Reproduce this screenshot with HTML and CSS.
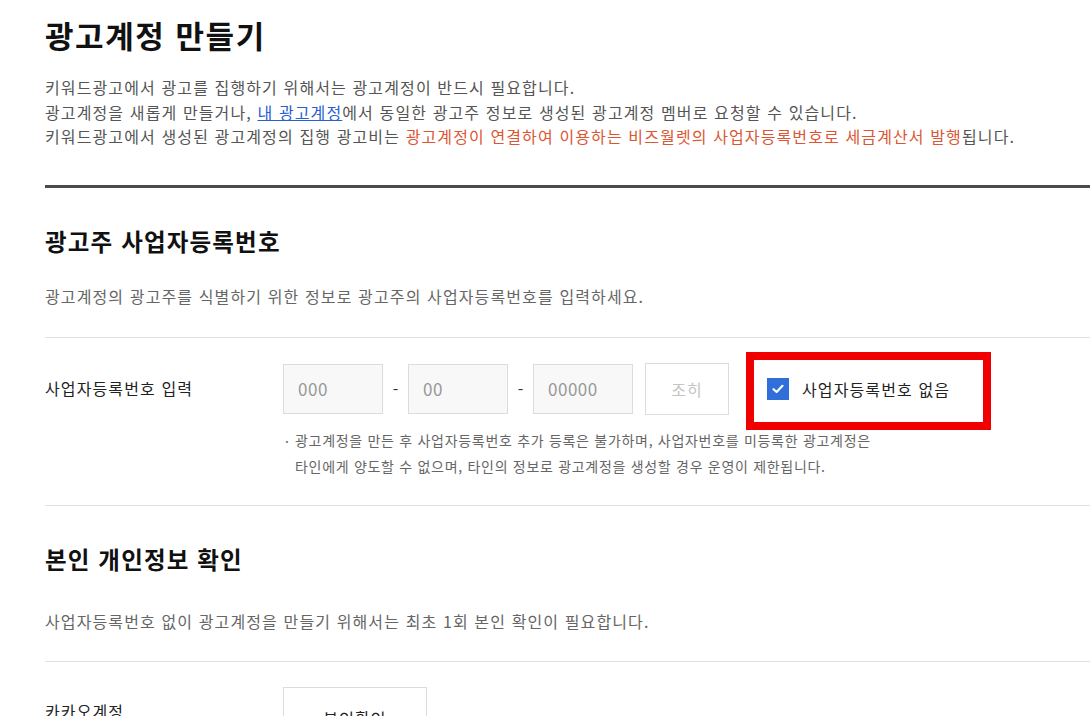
FILE: index.html
```html
<!DOCTYPE html>
<html lang="ko">
<head>
<meta charset="utf-8">
<title>광고계정 만들기</title>
<link rel="stylesheet" href="styles.css">
</head>
<body>
<main class="page">
  <h1 class="page-title">광고계정 만들기</h1>
  <p class="intro">
    키워드광고에서 광고를 집행하기 위해서는 광고계정이 반드시 필요합니다.<br>
    광고계정을 새롭게 만들거나, <a class="link" href="#">내 광고계정</a>에서 동일한 광고주 정보로 생성된 광고계정 멤버로 요청할 수 있습니다.<br>
    키워드광고에서 생성된 광고계정의 집행 광고비는 <span class="accent">광고계정이 연결하여 이용하는 비즈월렛의 사업자등록번호로 세금계산서 발행</span>됩니다.
  </p>

  <section class="section section-first">
    <h2 class="section-title">광고주 사업자등록번호</h2>
    <p class="section-desc">광고계정의 광고주를 식별하기 위한 정보로 광고주의 사업자등록번호를 입력하세요.</p>
    <div class="form-row">
      <div class="row-label">사업자등록번호 입력</div>
      <div class="row-field">
        <div class="field-line">
          <input class="num-input" type="text" placeholder="000">
          <span class="dash">-</span>
          <input class="num-input" type="text" placeholder="00">
          <span class="dash">-</span>
          <input class="num-input" type="text" placeholder="00000">
          <button class="btn-lookup" type="button">조히</button>
          <label class="check">
            <span class="check-box">
              <svg width="14" height="14" viewBox="0 0 14 14"><path d="M2.5 7.2 L5.6 10 L11.5 3.8" fill="none" stroke="#fff" stroke-width="2.2" stroke-linecap="round" stroke-linejoin="round"/></svg>
            </span>
            <span class="check-text">사업자등록번호 없음</span>
            <span class="highlight"></span>
          </label>
        </div>
        <div class="note">
          <span class="note-dot">.</span>
          <span class="note-text">광고계정을 만든 후 사업자등록번호 추가 등록은 불가하며, 사업자번호를 미등록한 광고계정은<br>타인에게 양도할 수 없으며, 타인의 정보로 광고계정을 생성할 경우 운영이 제한됩니다.</span>
        </div>
      </div>
    </div>
  </section>

  <section class="section section-second">
    <h2 class="section-title">본인 개인정보 확인</h2>
    <p class="section-desc">사업자등록번호 없이 광고계정을 만들기 위해서는 최초 1회 본인 확인이 필요합니다.</p>
    <div class="form-row">
      <div class="row-label row-label-mid">카카오계정</div>
      <div class="row-field">
        <button class="btn-verify" type="button">본인확인</button>
      </div>
    </div>
  </section>
</main>
</body>
</html>
```

FILE: styles.css
```css
html, body {
  margin: 0;
  padding: 0;
  overflow: hidden;
  background: #fff;
}

body {
  font-family: "Noto Sans CJK KR", "Noto Sans", sans-serif;
  color: #222;
  letter-spacing: 0.07em;
}

.page {
  padding-left: 45px;
}

.page-title {
  margin: 15px 0 0;
  font-size: 31px;
  line-height: 40px;
  font-weight: 700;
  color: #111;
  letter-spacing: 0.05em;
}

.intro {
  margin: 20px 0 0;
  font-size: 16px;
  line-height: 24.5px;
  color: #555;
}

.link {
  color: #2a5fcf;
  text-decoration: underline;
}

.accent {
  color: #dc5634;
}

.section {
  border-top: 1px solid #e1e1e1;
  padding-top: 39px;
}

.section-first {
  margin-top: 36px;
  border-top: 3px solid #4b4b4b;
  padding-top: 37px;
}

.section-second {
  padding-top: 37px;
}

.section-title {
  margin: 0;
  font-size: 23.5px;
  line-height: 32px;
  font-weight: 700;
  color: #111;
  letter-spacing: 0.05em;
}

.section-desc {
  margin: 27px 0 0;
  font-size: 16px;
  line-height: 24px;
  color: #666;
  padding-bottom: 29px;
}

.section-second .section-desc {
  margin-top: 34px;
  padding-bottom: 28px;
}

.form-row {
  display: flex;
  border-top: 1px solid #e1e1e1;
  padding-top: 25px;
  padding-bottom: 26px;
}

.row-label {
  width: 238px;
  flex: none;
  font-size: 16px;
  line-height: 50px;
  color: #222;
}

.row-field {
  display: flex;
  flex-direction: column;
}

.field-line {
  display: flex;
  align-items: center;
}

.num-input {
  box-sizing: border-box;
  width: 100px;
  height: 50px;
  border: 1px solid #dcdcdc;
  background: #f8f8f8;
  padding: 0 14px;
  font-family: inherit;
  font-size: 17px;
  letter-spacing: 0.03em;
  color: #333;
  outline: none;
}

.num-input::placeholder {
  color: #999;
}

.dash {
  width: 25px;
  text-align: center;
  font-size: 16px;
  color: #333;
  letter-spacing: 0;
}

.btn-lookup {
  box-sizing: border-box;
  margin-left: 12px;
  width: 84px;
  height: 52px;
  border: 1px solid #dcdcdc;
  background: #fff;
  font-family: inherit;
  font-size: 16px;
  letter-spacing: 0.07em;
  color: #c4c4c4;
  padding: 0;
}

.check {
  position: relative;
  display: flex;
  align-items: center;
  margin-left: 38px;
}

.check-box {
  width: 22px;
  height: 22px;
  background: #306fd9;
  display: flex;
  align-items: center;
  justify-content: center;
}

.check-text {
  margin-left: 13px;
  font-size: 16px;
  color: #222;
}

.highlight {
  position: absolute;
  left: -21px;
  top: -25px;
  width: 245px;
  height: 78px;
  box-sizing: border-box;
  border: 8px solid #f00000;
  pointer-events: none;
}

.note {
  display: flex;
  margin-top: 12px;
  font-size: 14px;
  line-height: 26px;
  color: #666;
  letter-spacing: 0.05em;
}

.note-dot {
  width: 12px;
  flex: none;
  padding-left: 2px;
  box-sizing: border-box;
  position: relative;
  top: -3px;
}

.btn-verify {
  box-sizing: border-box;
  width: 144px;
  height: 62px;
  border: 1px solid #dcdcdc;
  background: #fff;
  font-family: inherit;
  font-size: 16px;
  letter-spacing: 0.07em;
  color: #222;
  padding: 0;
}

.row-label-mid {
  line-height: 48px;
}
```
